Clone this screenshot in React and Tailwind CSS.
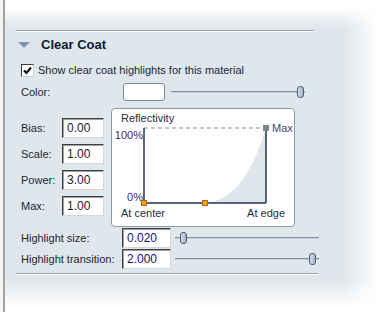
import React from 'react'

function Slider({ width, thumb }) {
  return (
    <div className="relative h-[14px]" style={{ width }}>
      <div className="absolute left-0 right-0 top-[6px] h-[2px] bg-[#7f92a8] border-b border-[#c3ceda]" />
      <div
        className="absolute top-[1px] w-[7px] h-[12px] rounded-[3px] border border-[#4e5f75] bg-[linear-gradient(to_right,#d3dde8,#a3b4c7)]"
        style={{ left: thumb }}
      />
    </div>
  )
}

function Field({ value, width = 42, blue }) {
  return (
    <div
      className={`h-[20px] bg-white border-t border-l border-t-[#3e3e3e] border-l-[#3e3e3e] border-r border-b border-r-[#d6d6d6] border-b-[#d6d6d6] shadow-[inset_1px_1px_0_#a0a0a0] flex items-center pl-[4px] text-[12px] ${blue ? 'text-[#17106a]' : 'text-[#1b1b2a]'}`}
      style={{ width }}
    >
      {value}
    </div>
  )
}

function Graph() {
  return (
    <div className="w-[184px] h-[119px] bg-white border border-[#8d99a7] rounded-[4px] flex flex-col">
      <div className="h-[19px] pl-[9px] flex items-center text-[#1e2c44]">Reflectivity</div>
      <div className="h-[75px] flex">
        <div className="w-[31px] flex flex-col justify-between items-end text-[#3a2c5c] leading-[13px] mt-[1px] -mb-[1px]">
          <span>100%</span>
          <span>0%</span>
        </div>
        <svg width="126" height="75" viewBox="0 0 126 75" className="overflow-visible">
          <path d="M62,75 C87,73 107,52 123,0 L123,75 Z" fill="#dfe6ec" />
          <line x1="1" y1="0" x2="123" y2="0" stroke="#8a8f96" strokeDasharray="4 3" />
          <line x1="1" y1="0" x2="1" y2="75" stroke="#1f3550" strokeWidth="1.5" />
          <line x1="1" y1="75" x2="123" y2="75" stroke="#1f3550" strokeWidth="1.5" />
          <line x1="123" y1="0" x2="123" y2="75" stroke="#1f3550" strokeWidth="1.5" />
          <rect x="120" y="-3" width="6" height="6" fill="#7b8594" />
          <rect x="-1.5" y="72.5" width="5" height="5" fill="#f3a21a" stroke="#b8650a" />
          <rect x="59.5" y="72.5" width="5" height="5" fill="#f3a21a" stroke="#b8650a" />
        </svg>
        <span className="ml-[3px] -mt-[6px] h-[13px] leading-[13px] text-[#3a4a6a]">Max</span>
      </div>
      <div className="h-[20px] px-[9px] flex items-center justify-between text-[#1e2c44]">
        <span>At center</span>
        <span>At edge</span>
      </div>
    </div>
  )
}

export default function App() {
  const params = [
    ['Bias:', '0.00'],
    ['Scale:', '1.00'],
    ['Power:', '3.00'],
    ['Max:', '1.00'],
  ]
  return (
    <div className="w-[379px] h-[312px] overflow-hidden bg-[#f4f4f4] font-['Liberation_Sans',Arial,sans-serif] text-[11px] text-[#1b2635]">
      <div className="ml-[3px] h-full border-l-2 border-[#a2a2a2] bg-[#dfe6ec] bg-[image:linear-gradient(to_right,rgba(255,255,255,0)_338px,#fff_374px),linear-gradient(to_bottom,#fff_8px,rgba(255,255,255,0)_28px,rgba(255,255,255,0)_278px,#fff_308px)] pt-[30px]">
        <div className="ml-[11px] w-[298px] h-[2px] bg-[#95a3b2] border-b border-white" />
        <div className="pl-[16px]">
          <div className="h-[26px] flex items-center">
            <svg width="12" height="6" viewBox="0 0 12 6" className="-ml-[3px]">
              <path d="M0,0 L12,0 L6,6 Z" fill="#8595ab" />
            </svg>
            <span className="ml-[11px] text-[13px] font-bold text-[#0f1c30]">Clear Coat</span>
          </div>
          <div className="h-[24px] flex items-center">
            <div className="w-[13px] h-[13px] bg-white border border-t-[#3a3a3a] border-l-[#3a3a3a] border-r-[#cfcfcf] border-b-[#cfcfcf] flex items-center justify-center">
              <svg width="9" height="9" viewBox="0 0 9 9">
                <path d="M1,4.5 L3.5,7 L8,1.5" fill="none" stroke="#000" strokeWidth="2" />
              </svg>
            </div>
            <span className="ml-[4px]">Show clear coat highlights for this material</span>
          </div>
          <div className="h-[20px] flex items-center">
            <span className="w-[102px]">Color:</span>
            <div className="w-[42px] h-[18px] bg-white border border-[#7d8a99] rounded-[3px]" />
            <div className="ml-[6px]">
              <Slider width={134} thumb={126} />
            </div>
          </div>
          <div className="mt-[6px] flex">
            <div className="w-[90px] pt-[10px] flex flex-col gap-[6px]">
              {params.map(([label, value]) => (
                <div key={label} className="h-[20px] flex items-center">
                  <span className="w-[41px]">{label}</span>
                  <Field value={value} />
                </div>
              ))}
            </div>
            <Graph />
          </div>
          <div className="mt-[1px] h-[21px] flex items-start">
            <span className="w-[101px] h-[20px] flex items-center">Highlight size:</span>
            <Field value="0.020" width={49} blue />
            <div className="ml-[4px] mt-[3px]">
              <Slider width={144} thumb={5} />
            </div>
          </div>
          <div className="h-[21px] flex items-start">
            <span className="w-[101px] h-[20px] flex items-center">Highlight transition:</span>
            <Field value="2.000" width={49} blue />
            <div className="ml-[4px] mt-[3px]">
              <Slider width={144} thumb={134} />
            </div>
          </div>
        </div>
        <div className="mt-[3px] ml-[11px] w-[302px] h-[2px] bg-[#95a3b2] border-b border-white" />
      </div>
    </div>
  )
}
